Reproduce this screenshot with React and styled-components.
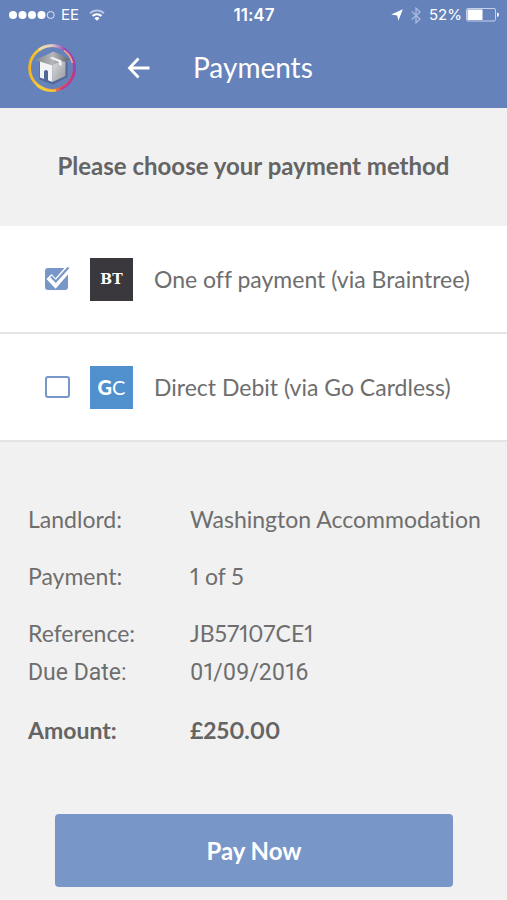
import { useState } from "react";
import styled, { createGlobalStyle } from "styled-components";

const COLORS = {
	header: "#6682bb",
	button: "#7896c7",
	page: "#f1f1f1",
	white: "#ffffff",
	line: "#e4e4e4",
	text: "#6e6e6e",
	strong: "#646464",
	braintree: "#3a383c",
	cardless: "#4f90cd",
};

const METHODS = [
	{ id: "braintree", title: "One off payment (via Braintree)" },
	{ id: "cardless", title: "Direct Debit (via Go Cardless)" },
];

const DETAILS = [
	{ label: "Landlord:", value: "Washington Accommodation" },
	{ label: "Payment:", value: "1 of 5" },
	{ label: "Reference:", value: "JB57107CE1", close: true },
	{ label: "Due Date:", value: "01/09/2016", system: true },
	{ label: "Amount:", value: "£250.00", strong: true },
];

const StatusBar = () => (
	<StatusWrapper>
		<StatusSide>
			<svg width="46" height="10" viewBox="0 0 46 10" aria-hidden="true">
				{[4, 13.5, 23, 32.5].map((x) => (
					<circle key={x} cx={x} cy="5" r="4" fill="#fff" />
				))}
				<circle cx="41.7" cy="5" r="3.5" fill="none" stroke="#dfe7f6" />
			</svg>
			<span>EE</span>
			<WifiIcon width="16" height="12" viewBox="0 0 16 12" aria-hidden="true">
				<path d="M1 4.4a10 10 0 0 1 14 0" stroke="#b5c5e4" />
				<path d="M3.5 7a6.4 6.4 0 0 1 9 0" stroke="#fff" />
				<path d="M8 11.8 5.4 9.2a3.8 3.8 0 0 1 5.2 0z" fill="#fff" stroke="none" />
			</WifiIcon>
		</StatusSide>
		<Clock>11:47</Clock>
		<StatusSide $end>
			<svg width="12" height="12" viewBox="0 0 12 12" aria-hidden="true">
				<path d="M11.8.2 7.4 11.8 6.2 6.4.2 5.4z" fill="#fff" />
			</svg>
			<svg width="10" height="17" viewBox="0 0 10 17" aria-hidden="true">
				<path
					d="M.8 4.6 9 12 5 15.8V1.2L9 5 .8 12.4"
					fill="none"
					stroke="#a9bbdf"
					strokeWidth="1.3"
				/>
			</svg>
			<Percent>52%</Percent>
			<svg width="33" height="14" viewBox="0 0 33 14" aria-hidden="true">
				<rect x=".5" y=".5" width="29" height="12.5" rx="1.5" fill="none" stroke="#c4d1eb" />
				<rect x="1.5" y="1.5" width="15" height="10.5" fill="#fff" />
				<path d="M31 4.5q2 .5 2 2.3t-2 2.3z" fill="#fff" />
			</svg>
		</StatusSide>
	</StatusWrapper>
);

const Logo = () => (
	<svg width="50" height="50" viewBox="0 0 50 50" role="img" aria-label="Home">
		<defs>
			<linearGradient id="ring" x1="0" y1="0" x2="1" y2="0">
				<stop offset="0" stopColor="#f7b51c" />
				<stop offset=".3" stopColor="#f6cf45" />
				<stop offset=".7" stopColor="#e8504a" />
				<stop offset="1" stopColor="#c8386a" />
			</linearGradient>
			<linearGradient id="top" x1="0" y1="0" x2="1" y2="0">
				<stop offset="0" stopColor="#f2dc9a" />
				<stop offset=".5" stopColor="#d6cfdb" />
				<stop offset="1" stopColor="#9747b8" />
			</linearGradient>
			<linearGradient id="roof" x1="0" y1="0" x2="1" y2="0">
				<stop offset="0" stopColor="#85898d" />
				<stop offset=".5" stopColor="#b5b7b9" />
				<stop offset="1" stopColor="#62666c" />
			</linearGradient>
			<linearGradient id="side" x1="0" y1="0" x2="1" y2="1">
				<stop offset="0" stopColor="#dcdddf" />
				<stop offset="1" stopColor="#94979c" />
			</linearGradient>
		</defs>
		<circle cx="25" cy="25" r="22.4" fill="none" stroke="url(#ring)" strokeWidth="2.8" />
		<path d="M12 6.8A22.4 22.4 0 0 1 38 6.8" fill="none" stroke="url(#top)" strokeWidth="2.8" />
		<path d="M37 5.4A23.200 23.200 0 0 1 48 27" fill="none" stroke="#9747b8" strokeWidth="1.800" />
		<path d="M37 7.500A21.200 21.200 0 0 1 45.500 20" fill="none" stroke="#f3b090" strokeWidth="1.500" />
		<path d="M48 27A23 23 0 0 1 34 46.300" fill="none" stroke="#b03aa6" strokeWidth="1.500" />
		<path d="M10 42.500A23 23 0 0 0 29 47.400" fill="none" stroke="#f5ce36" strokeWidth="2" />
		<path d="M12.500 20v16.500l13.500 5 14.500-7.500V19z" fill="#46557d" opacity=".6" />
		<path d="M13 18 25.500 22v17l-4.500-1.700v-9q-2-2.800-4 0V36l-4-1.500z" fill="#f3f4f5" />
		<path d="M25.500 21 38.500 17v16l-13 6z" fill="url(#side)" />
		<path d="M8.500 17 26.500 8.500 42.500 16l-4 3-6-1-7 4.500z" fill="url(#roof)" />
		<path d="m22.500 15 3-1 9 3.500v5.500l-2.500-1v-3z" fill="#f3f4f5" />
	</svg>
);

const MethodRow = ({ method, checked, onPick }) => (
	<MethodLabel>
		<CheckWrapper>
			<CheckInput
				type="checkbox"
				name={method.id}
				checked={checked}
				onChange={() => onPick(method.id)}
			/>
			{checked && (
				<Tick width="28" height="26" viewBox="0 0 28 26" aria-hidden="true">
					<path d="m4 11.500 6.500 7L24 3" stroke="#fff" strokeWidth="7" />
					<path d="m6 11.500 4.800 5L23.500 2.500" stroke={COLORS.button} strokeWidth="2.200" />
				</Tick>
			)}
		</CheckWrapper>
		{method.id === "braintree" ? (
			<BraintreeBadge>BT</BraintreeBadge>
		) : (
			<CardlessBadge>
				<b>G</b>C
			</CardlessBadge>
		)}
		<span>{method.title}</span>
	</MethodLabel>
);

const App = () => {
	const [picked, setPicked] = useState("braintree");

	return (
		<Page>
			<GlobalStyle />
			<Header>
				<StatusBar />
				<NavWrapper>
					<Logo />
					<BackButton type="button" aria-label="Back">
						<svg width="24" height="22" viewBox="0 0 24 22" aria-hidden="true">
							<path
								d="M11.500 1.500 2.500 11l9 9.500M2.500 11H22.500"
								fill="none"
								stroke="#fff"
								strokeWidth="2.800"
							/>
						</svg>
					</BackButton>
					<Title>Payments</Title>
				</NavWrapper>
			</Header>
			<main>
				<Prompt>Please choose your payment method</Prompt>
				<div>
					{METHODS.map((method) => (
						<MethodRow
							key={method.id}
							method={method}
							checked={picked === method.id}
							onPick={setPicked}
						/>
					))}
				</div>
				<DetailList>
					{DETAILS.map(({ label, value, close, system, strong }) => (
						<DetailRow key={label} $close={close} $system={system} $strong={strong}>
							<dt>{label}</dt>
							<dd>{value}</dd>
						</DetailRow>
					))}
				</DetailList>
				<PayWrapper>
					<PayButton type="button">Pay Now</PayButton>
				</PayWrapper>
			</main>
		</Page>
	);
};

const GlobalStyle = createGlobalStyle`
	* {
		box-sizing: border-box;
	}
	body {
		margin: 0;
		background: ${COLORS.page};
	}
	button, input {
		font-family: inherit;
	}
`;
const Page = styled.div`
	font-family: Lato, "Open Sans", sans-serif;
	font-size: 23px;
	line-height: 28px;
	font-variant-ligatures: none;
	font-variant-numeric: proportional-nums;
	color: ${COLORS.text};
`;
const Header = styled.header`
	background: ${COLORS.header};
	color: ${COLORS.white};
`;
const StatusWrapper = styled.div`
	display: grid;
	grid-template-columns: 1fr auto 1fr;
	align-items: center;
	height: 30px;
	padding: 0 8px 0 9px;
	font-family: Inter, Roboto, sans-serif;
	font-size: 15px;
	line-height: 20px;
`;
const StatusSide = styled.div`
	display: flex;
	align-items: center;
	justify-content: ${(props) => (props.$end ? "flex-end" : "flex-start")};
	gap: ${(props) => (props.$end ? "8px" : "6px")};
`;
const Percent = styled.span`
	margin-right: -4px;
`;
const WifiIcon = styled.svg`
	margin-left: 4px;
	fill: none;
	stroke-width: 2;
`;
const Clock = styled.span`
	font-size: 17px;
	font-weight: 600;
`;
const NavWrapper = styled.div`
	display: flex;
	align-items: center;
	height: 78px;
	padding: 0 27px 2px;
`;
const BackButton = styled.button`
	display: flex;
	margin-left: 50px;
	padding: 0;
	border: 0;
	background: none;
	cursor: pointer;
`;
const Title = styled.h1`
	margin: 0 0 2px 42px;
	font-size: 28px;
	line-height: 36px;
	font-weight: 400;
`;
const Prompt = styled.h2`
	margin: 0;
	padding: 44px 16px 46px;
	font-size: 24px;
	line-height: 28px;
	font-weight: 700;
	text-align: center;
	color: ${COLORS.strong};
`;
const MethodLabel = styled.label`
	display: flex;
	align-items: center;
	height: 108px;
	padding: 0 16px 0 45px;
	background: ${COLORS.white};
	border-bottom: 2px solid ${COLORS.line};
	cursor: pointer;
`;
const CheckWrapper = styled.span`
	position: relative;
	display: flex;
	margin-right: 20px;
`;
const CheckInput = styled.input`
	appearance: none;
	width: 25px;
	height: 22px;
	margin: 0;
	border: 2px solid ${COLORS.button};
	border-radius: 3px;
	cursor: pointer;
	&:checked {
		width: 23px;
		margin-right: 2px;
		background: ${COLORS.button};
	}
`;
const Tick = styled.svg`
	position: absolute;
	left: 0;
	top: -3px;
	fill: none;
	pointer-events: none;
`;
const Badge = styled.span`
	display: flex;
	align-items: center;
	justify-content: center;
	width: 43px;
	height: 43px;
	margin-right: 21px;
	color: ${COLORS.white};
`;
const BraintreeBadge = styled(Badge)`
	background: ${COLORS.braintree};
	font-family: "DejaVu Serif", serif;
	font-size: 14px;
	font-weight: 700;
`;
const CardlessBadge = styled(Badge)`
	background: ${COLORS.cardless};
	font-size: 20px;
	font-weight: 400;
	b {
		font-weight: 900;
	}
`;
const DetailList = styled.dl`
	margin: 0;
	padding: 63px 28px 0;
`;
const DetailRow = styled.div`
	display: grid;
	grid-template-columns: 162px 1fr;
	margin-bottom: ${(props) => (props.$close ? "12px" : "29px")};
	font-family: ${(props) => (props.$system ? "Roboto, sans-serif" : "inherit")};
	font-weight: ${(props) => (props.$strong ? 700 : 400)};
	color: ${(props) => (props.$strong ? COLORS.strong : "inherit")};
	dd {
		margin: 0;
		white-space: nowrap;
	}
`;
const PayWrapper = styled.div`
	padding: 41px 54px 13px 55px;
`;
const PayButton = styled.button`
	width: 100%;
	height: 73px;
	border: 0;
	border-radius: 4px;
	background: ${COLORS.button};
	color: ${COLORS.white};
	font-size: 24px;
	font-weight: 700;
	cursor: pointer;
`;
export default App;
